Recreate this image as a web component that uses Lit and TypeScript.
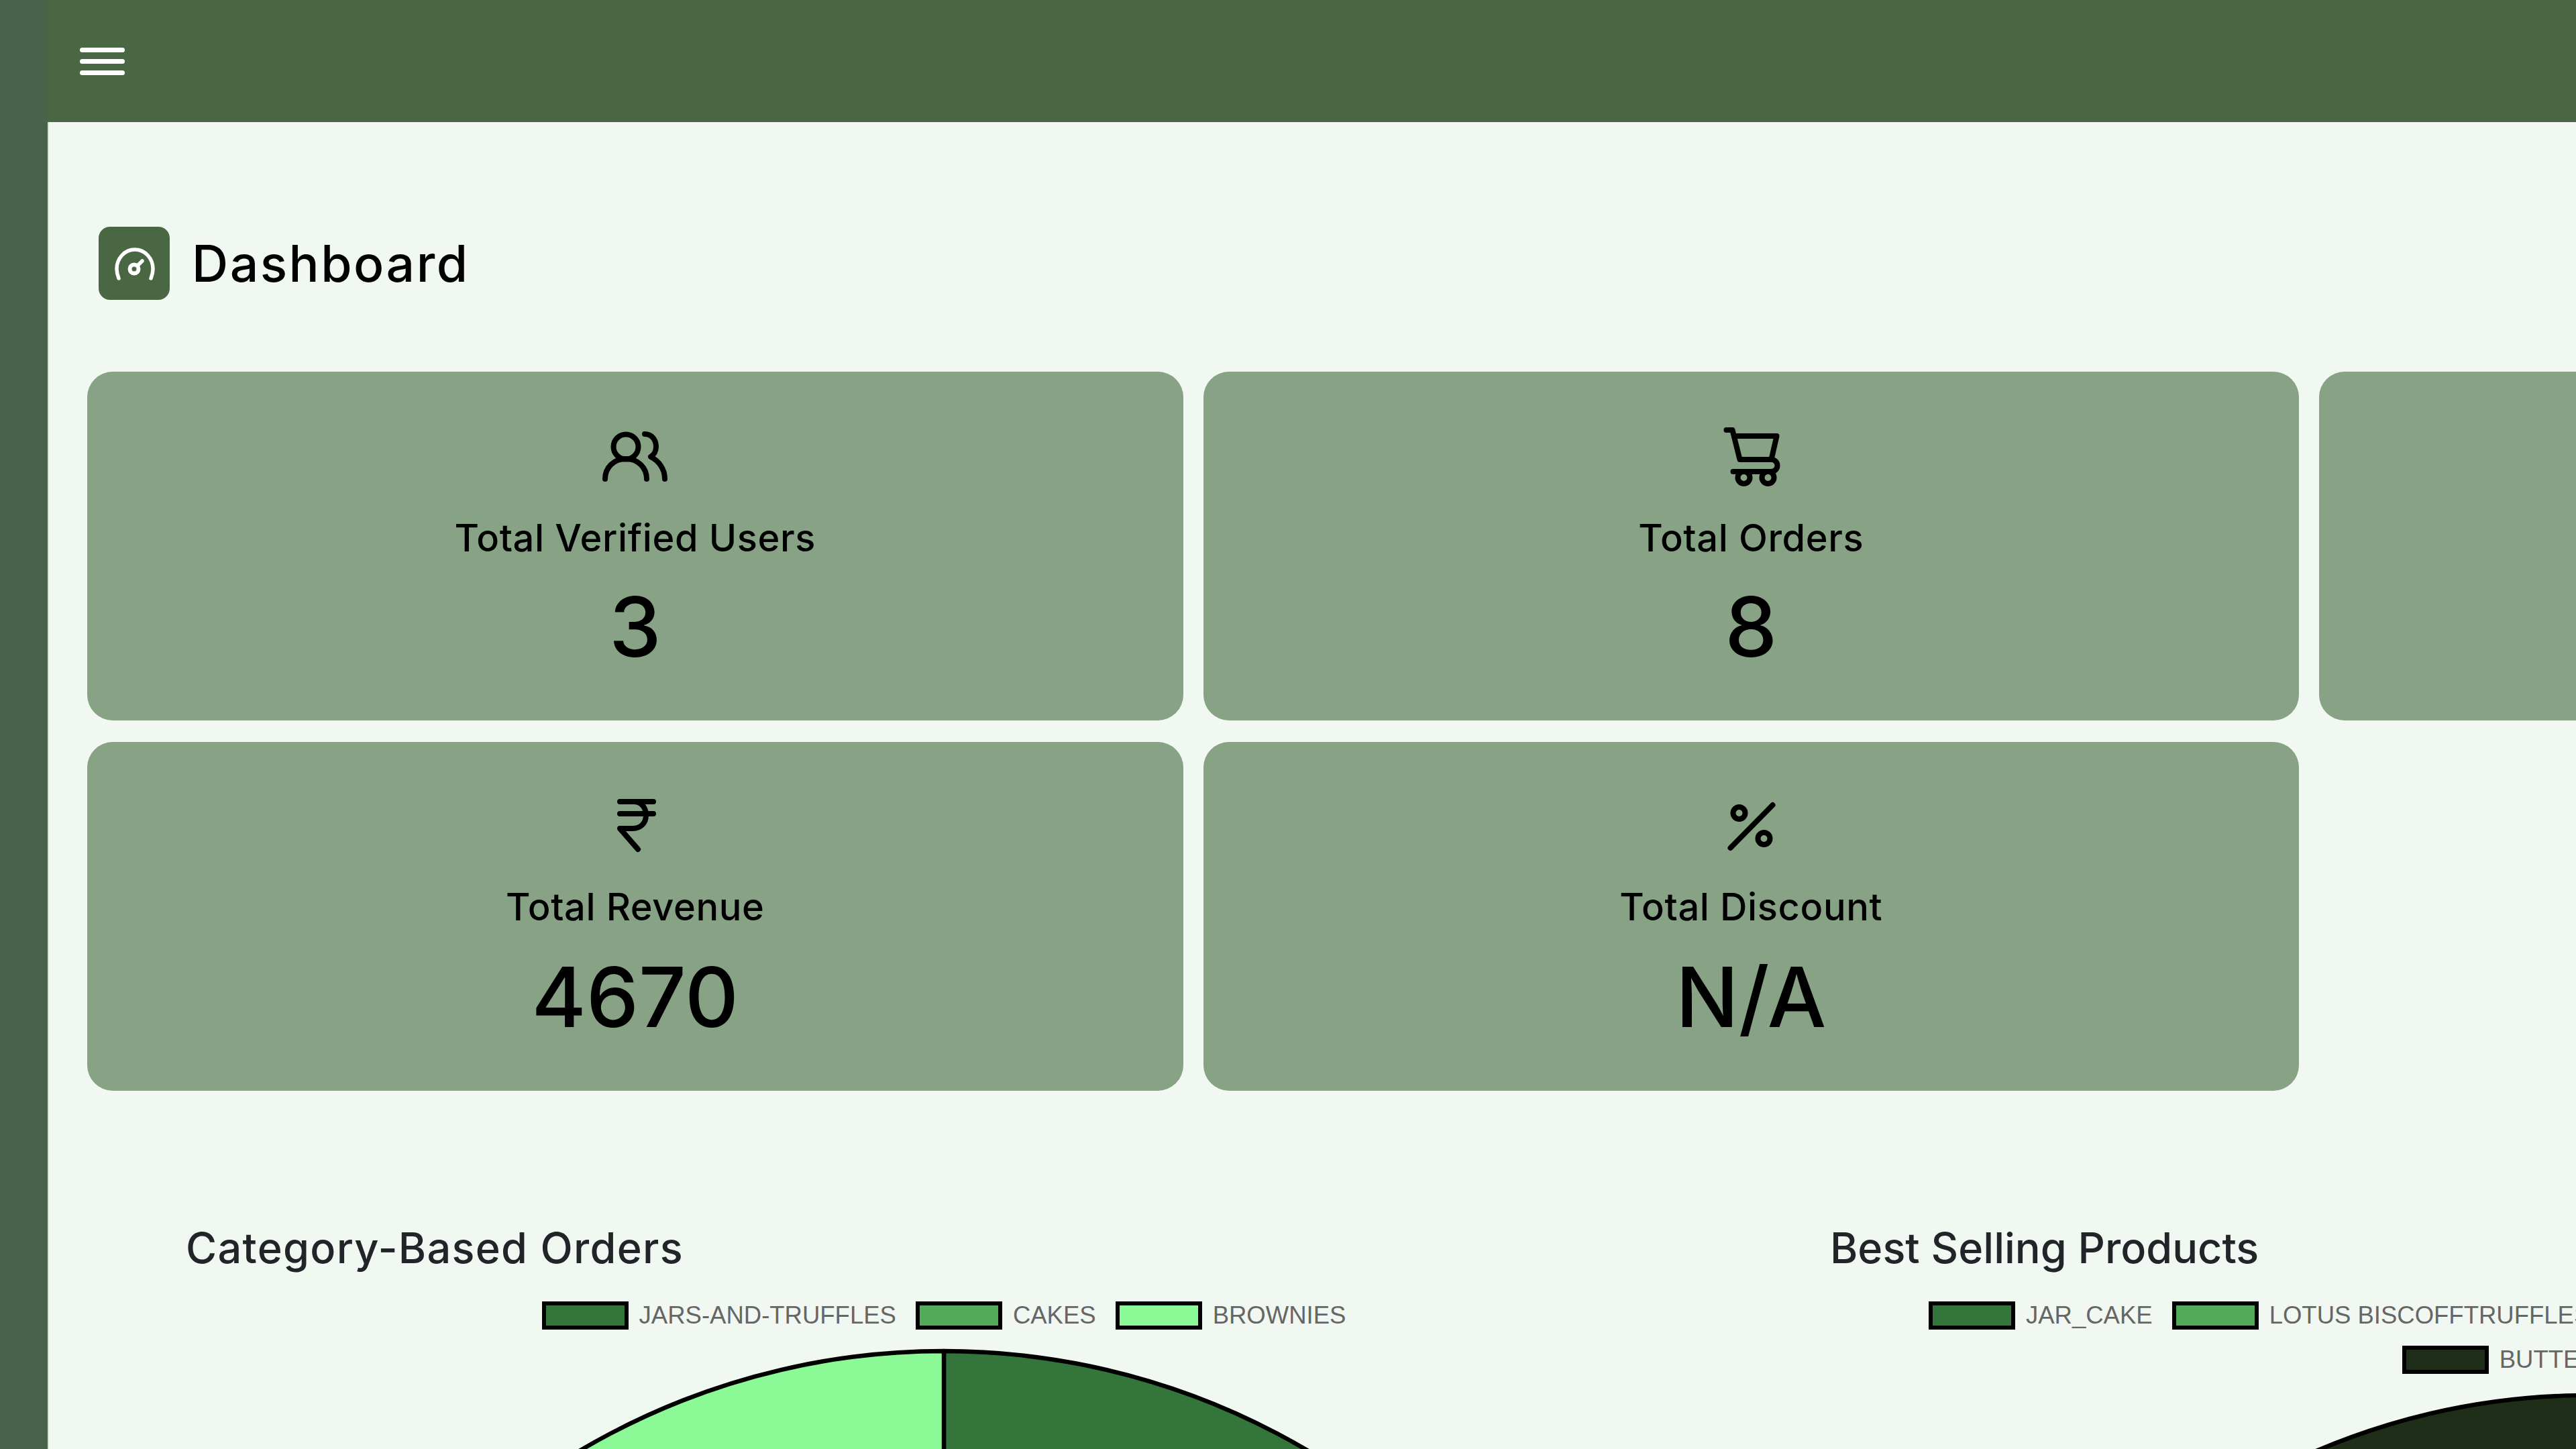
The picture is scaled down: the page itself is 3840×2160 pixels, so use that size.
import { LitElement, html, css, svg } from 'lit';
import { customElement } from 'lit/decorators.js';

type Slice = { label: string; color: string; value: number };

const polar = (cx: number, cy: number, r: number, deg: number) => {
  const a = ((deg - 90) * Math.PI) / 180;
  return [cx + r * Math.cos(a), cy + r * Math.sin(a)];
};

const icons = {
  users: svg`<svg class="icon" viewBox="880 630 133 100" fill="none" stroke="#000" stroke-width="8" stroke-linecap="round" stroke-linejoin="round">
    <circle cx="933" cy="666" r="18.5"/>
    <path d="M902 714c0-17 13-30 31-30s31 13 31 30"/>
    <path d="M961 647c10 0 17 8 17 19 0 6-3 12-8 15 12 6 21 18 21 33"/>
  </svg>`,
  cart: svg`<svg class="icon" viewBox="2543.5 630 133 100" fill="none" stroke="#000" stroke-width="8" stroke-linejoin="round">
    <path d="M2573 641h9l11 44h47a9 9 0 0 1 0 18h-57" stroke-linecap="round" />
    <path d="M2584 650h64l-8 35" />
    <circle cx="2599" cy="712" r="9" />
    <circle cx="2635" cy="712" r="9" />
  </svg>`,
  rupee: svg`<svg class="icon" viewBox="880 1179 133 100" fill="none" stroke="#000" stroke-width="8" stroke-linecap="round" stroke-linejoin="round">
    <path d="M924 1194h50M924 1212h50"/>
    <path d="M945 1194c10 0 18 8 18 20s-8 20-20 20h-19l27 31"/>
  </svg>`,
  percent: svg`<svg class="icon" viewBox="2543.5 1179 133 100" fill="none" stroke="#000" stroke-width="8" stroke-linecap="round">
    <path d="M2579 1263l63-64"/>
    <circle cx="2592" cy="1211" r="9"/>
    <circle cx="2629" cy="1249" r="9"/>
  </svg>`,
};

@customElement('app-root')
export class AppRoot extends LitElement {
  static override styles = css`
    :host {
      display: block;
      width: 3840px;
      height: 2160px;
      overflow: hidden;
      background: #f1f8f1;
      font-family: Inter, 'Open Sans', sans-serif;
    }

    .shell {
      display: flex;
      height: 100%;
    }

    .sidebar {
      flex: 0 0 71px;
      background: #47644a;
    }

    .main {
      flex: 1;
      min-width: 0;
    }

    .topbar {
      height: 182px;
      background: #486742;
      display: flex;
      align-items: center;
      padding-left: 48px;
    }

    .burger {
      display: flex;
      flex-direction: column;
      gap: 10px;
      width: 67px;
    }

    .burger span {
      height: 7px;
      border-radius: 4px;
      background: #fff;
    }

    .content {
      border-left: 2px solid #d5dcd4;
      padding: 156px 0 0 57px;
      height: 1978px;
    }

    .heading {
      display: flex;
      align-items: center;
      gap: 33px;
      margin-left: 17px;
      height: 109px;
    }

    .badge {
      width: 106px;
      height: 109px;
      border-radius: 17px;
      background: #486742;
      display: flex;
      align-items: center;
      justify-content: center;
    }

    .badge svg {
      width: 106px;
      height: 109px;
    }

    h1 {
      margin: 0;
      font-size: 75px;
      font-weight: 500;
      letter-spacing: 2.500px;
      color: #000;
      line-height: 1;
    }

    .cards {
      display: grid;
      grid-template-columns: repeat(3, 1633.500px);
      grid-auto-rows: 520px;
      column-gap: 30px;
      row-gap: 32px;
      margin-top: 107px;
    }

    .card {
      background: #87a284;
      border-radius: 38px;
      display: flex;
      flex-direction: column;
      align-items: center;
      padding-top: 76px;
      box-sizing: border-box;
    }

    .card:nth-child(n + 4) {
      padding-top: 74px;
    }

    .icon {
      width: 133px;
      height: 100px;
      display: block;
    }

    .label {
      margin-top: 34px;
      font-size: 56px;
      font-weight: 500;
      letter-spacing: 0.600px;
      line-height: 76px;
      color: #000;
    }

    .value {
      margin-top: 18px;
      font-size: 124px;
      font-weight: 500;
      line-height: 152px;
      color: #000;
    }

    .card:nth-child(n + 4) .value {
      margin-top: 20px;
    }

    .charts {
      display: grid;
      grid-template-columns: repeat(2, 2260px);
      column-gap: 191px;
      margin: 196px 0 0 147px;
    }

    h2 {
      margin: 0;
      font-size: 63px;
      font-weight: 500;
      line-height: 76px;
      color: #212529;
    }

    h2.wide {
      letter-spacing: 1.300px;
    }

    .legend {
      margin-top: 42px;
      display: flex;
      flex-direction: column;
      gap: 24px;
    }

    .legend-row {
      display: flex;
      justify-content: center;
      gap: 29px;
      height: 42px;
    }

    .legend-row.shifted {
      justify-content: flex-start;
      padding-left: 147px;
    }

    .legend-item {
      display: flex;
      align-items: center;
      gap: 16px;
      white-space: nowrap;
      font-family: 'Liberation Sans', Arial, sans-serif;
      font-size: 36.500px;
      color: #666;
    }

    .swatch {
      width: 129px;
      height: 42px;
      box-sizing: border-box;
      border: 6.400px solid #000;
      flex: none;
    }

    .pie {
      display: block;
      margin: 28px auto 0;
    }
  `;

  private stats = [
    { icon: icons.users, label: 'Total Verified Users', value: '3' },
    { icon: icons.cart, label: 'Total Orders', value: '8' },
    null,
    { icon: icons.rupee, label: 'Total Revenue', value: '4670' },
    { icon: icons.percent, label: 'Total Discount', value: 'N/A' },
  ];

  private categorySlices: Slice[] = [
    { label: 'JARS-AND-TRUFFLES', color: '#33753a', value: 1 },
    { label: 'CAKES', color: '#52ab59', value: 1 },
    { label: 'BROWNIES', color: '#8af996', value: 1 },
  ];

  private productSlices: Slice[] = [
    { label: 'JAR_CAKE', color: '#33753a', value: 1 },
    { label: 'LOTUS BISCOFFTRUFFLES', color: '#52ab59', value: 1 },
    { label: 'BUTTERSCOTCH CAKE', color: '#1f2e18', value: 1 },
  ];

  private renderPie(slices: Slice[], r: number) {
    const size = 2 * r + 8;
    const c = size / 2;
    const total = slices.reduce((sum, s) => sum + s.value, 0);
    let start = 0;
    return html`<svg class="pie" width=${size} height=${size} viewBox="0 0 ${size} ${size}">
      ${slices.map((s) => {
        const end = start + (s.value / total) * 360;
        const [x1, y1] = polar(c, c, r, start);
        const [x2, y2] = polar(c, c, r, end);
        const large = end - start > 180 ? 1 : 0;
        start = end;
        return svg`<path d="M${c} ${c}L${x1} ${y1}A${r} ${r} 0 ${large} 1 ${x2} ${y2}Z" fill=${s.color} stroke="#000" stroke-width="6.400" stroke-linejoin="round"/>`;
      })}
    </svg>`;
  }

  private renderLegendItem(s: Slice) {
    return html`<div class="legend-item">
      <span class="swatch" style="background:${s.color}"></span>${s.label}
    </div>`;
  }

  override render() {
    const [jar, lotus, butter] = this.productSlices;
    return html`
      <div class="shell">
        <aside class="sidebar"></aside>
        <div class="main">
          <header class="topbar">
            <div class="burger"><span></span><span></span><span></span></div>
          </header>
          <section class="content">
            <div class="heading">
              <div class="badge">
                <svg viewBox="147 338 106 109" fill="none" stroke="#fff" stroke-width="5.500" stroke-linecap="round">
                  <path d="M177 415c-2-5-3-9-3-14 0-16 12-29 27-29s27 13 27 29c0 5-1 9-3 14"/>
                  <circle cx="200" cy="401" r="6.500" stroke-width="6"/>
                  <path d="M205 396l7-7"/>
                </svg>
              </div>
              <h1>Dashboard</h1>
            </div>
            <div class="cards">
              ${this.stats.map((s) =>
                s
                  ? html`<div class="card">
                      ${s.icon}
                      <div class="label">${s.label}</div>
                      <div class="value">${s.value}</div>
                    </div>`
                  : html`<div class="card"></div>`
              )}
            </div>
            <div class="charts">
              <div>
                <h2 class="wide">Category-Based Orders</h2>
                <div class="legend">
                  <div class="legend-row">${this.categorySlices.map((s) => this.renderLegendItem(s))}</div>
                </div>
                ${this.renderPie(this.categorySlices, 1066)}
              </div>
              <div>
                <h2>Best Selling Products</h2>
                <div class="legend">
                  <div class="legend-row shifted">${this.renderLegendItem(jar)}${this.renderLegendItem(lotus)}</div>
                  <div class="legend-row">${this.renderLegendItem(butter)}</div>
                </div>
                ${this.renderPie(this.productSlices, 1032)}
              </div>
            </div>
          </section>
        </div>
      </div>
    `;
  }
}
